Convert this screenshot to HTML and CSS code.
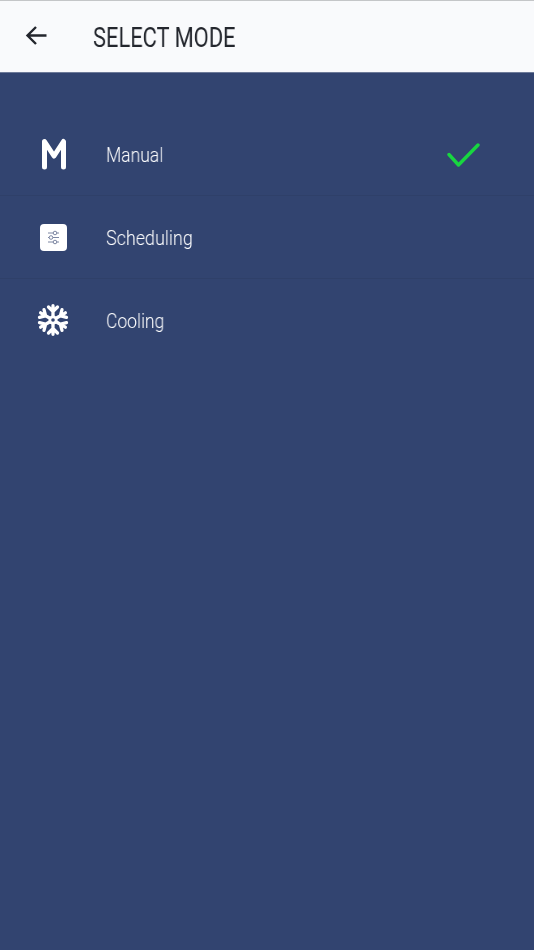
FILE: index.html
```html
<!DOCTYPE html>
<html lang="en">
<head>
<meta charset="utf-8">
<title>Select Mode</title>
<link rel="stylesheet" href="styles.css">
</head>
<body>
<header class="topbar">
  <svg class="back" width="23" height="22" viewBox="0 0 23 22" aria-hidden="true"><path d="M21.500 10.500H3M11 2 2.500 10.500 11 19" fill="none" stroke="#23262d" stroke-width="2.400"/></svg>
  <h1 class="title">SELECT MODE</h1>
</header>
<main class="modes">
  <div class="mode">
    <span class="icon icon-m"><svg width="26" height="32" viewBox="0 0 26 32" aria-hidden="true"><path d="M3.500 29V3.500L13 18 22.500 3.500V29" fill="none" stroke="#fff" stroke-width="5" stroke-linecap="round" stroke-linejoin="round"/></svg></span>
    <span class="label">Manual</span>
    <svg class="check" width="34" height="26" viewBox="0 0 34 26" aria-hidden="true"><path d="M3 12.500 12.500 23 32 3" fill="none" stroke="#18d640" stroke-width="3.400" stroke-linecap="round" stroke-linejoin="round"/></svg>
  </div>
  <div class="mode">
    <span class="icon"><svg width="27" height="27" viewBox="0 0 27 27" aria-hidden="true"><rect width="27" height="27" rx="4" fill="#fff"/><g fill="none" stroke="#7c86a2" stroke-width="1"><path d="M8 9h11M8 13.500h11M8 18h11"/><circle cx="15" cy="9" r="1.800" fill="#fff"/><circle cx="11" cy="13.500" r="1.800" fill="#fff"/><circle cx="15" cy="18" r="1.800" fill="#fff"/></g></svg></span>
    <span class="label label-wide">Scheduling</span>
  </div>
  <div class="mode">
    <span class="icon"><svg width="32" height="32" viewBox="-16 -16 32 32" aria-hidden="true"><defs><g id="arm"><path d="M0-3V-14.300M-4.500-13 0-8.500l4.500-4.500" fill="none" stroke="#fff" stroke-width="3.300" stroke-linecap="round"/></g></defs><use href="#arm"/><use href="#arm" transform="rotate(60)"/><use href="#arm" transform="rotate(120)"/><use href="#arm" transform="rotate(180)"/><use href="#arm" transform="rotate(240)"/><use href="#arm" transform="rotate(300)"/><circle r="4.500" fill="#fff"/><circle r="1.800" fill="#324470"/></svg></span>
    <span class="label">Cooling</span>
  </div>
</main>
</body>
</html>
```
FILE: styles.css
```css
* { box-sizing: border-box; }
html, body { margin: 0; height: 100%; }
body {
  width: 534px;
  height: 950px;
  overflow: hidden;
  background: #324470;
  font-family: Roboto, "Liberation Sans", sans-serif;
  display: flex;
  flex-direction: column;
}
.topbar {
  height: 73px;
  flex: none;
  display: flex;
  align-items: center;
  padding-left: 25px;
  gap: 45px;
  background: #f9fafc;
  border-top: 1px solid #c4c6c8;
  border-bottom: 1px solid #6d7a99;
}
.back { flex: none; margin-bottom: 1px; }
.title {
  margin: 0;
  font-size: 27px;
  font-weight: 400;
  line-height: 30px;
  padding-top: 2px;
  color: #23262d;
  transform: scaleX(.81);
  transform-origin: left center;
  will-change: transform;
}
.modes {
  padding-top: 40px;
  display: flex;
  flex-direction: column;
}
.mode {
  height: 83px;
  display: flex;
  align-items: center;
  border-bottom: 1px solid #2f4069;
}
.mode:last-child { height: 81px; border-bottom: 0; }
.icon {
  width: 106px;
  height: 40px;
  flex: none;
  display: flex;
  align-items: center;
  justify-content: center;
}
.icon-m { padding-left: 2px; }
.label {
  font-size: 20.500px;
  font-weight: 300;
  line-height: 24px;
  padding-top: 2px;
  color: #fff;
  flex: 1;
  transform: scaleX(.855);
  transform-origin: left center;
  will-change: transform;
}
.label-wide { transform: scaleX(.875); }
.check { flex: none; margin: 2px 54px 0 0; }
```
